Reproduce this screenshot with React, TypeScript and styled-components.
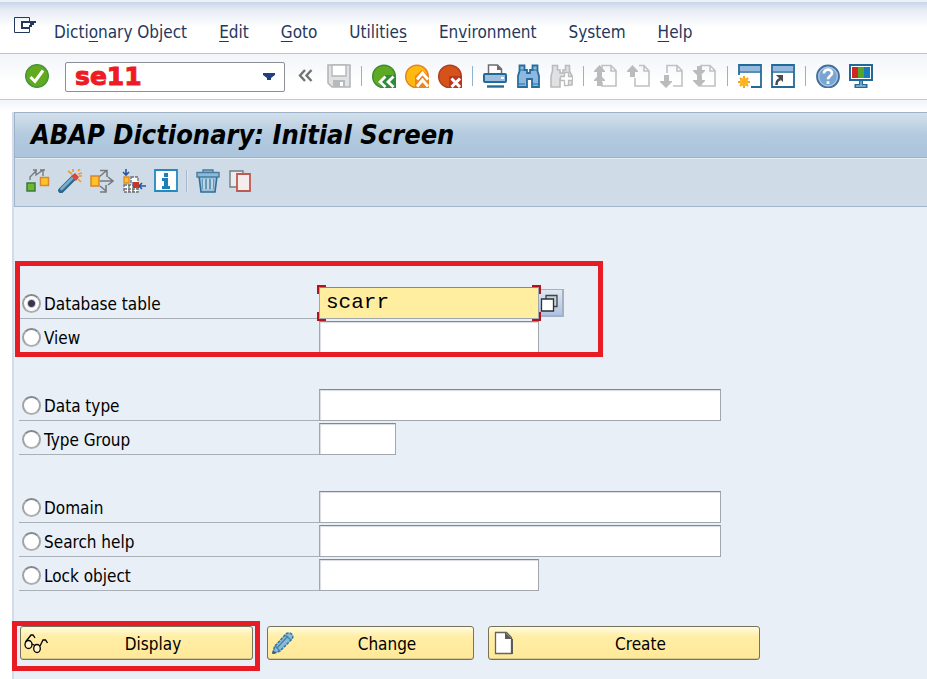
import React, { useState } from "react";
import styled, { createGlobalStyle, css } from "styled-components";

const GlobalStyle = createGlobalStyle`
  *, *::before, *::after { box-sizing: border-box; }
  body {
    margin: 0;
    background: #fff;
    color: #000;
    font-family: "DejaVu Sans Condensed", "DejaVu Sans", sans-serif;
    font-size: 17px;
  }
  button, input { font: inherit; color: inherit; }
`;

const Page = styled.div`
  display: flex;
  flex-direction: column;
  min-height: 100vh;
`;

const MenuBar = styled.nav`
  display: flex;
  align-items: center;
  height: 54px;
  padding: 8px 12px 0 13px;
  border-top: 2px solid #edf2f8;
  border-bottom: 1px solid #bcc3ca;
  background: linear-gradient(#c8d6e8, #e6ecf4 8px, #fff 26px);
`;

const MenuToggle = styled.button`
  display: flex;
  width: 24px;
  height: 24px;
  margin: 0 17px 8px 0;
  padding: 0;
  border: 0;
  background: none;
`;

const MenuList = styled.div`
  display: flex;
  gap: 32px;
`;

const MenuItem = styled.button`
  padding: 0;
  border: 0;
  background: none;
  color: #24375e;
  line-height: 24px;
  white-space: nowrap;

  u { text-underline-offset: 3px; }
`;

const SystemBar = styled.div`
  display: flex;
  align-items: center;
  gap: 9px;
  height: 46px;
  padding: 0 25px 2px;
  border-bottom: 1px solid #c3c9cf;
  background: linear-gradient(#f1f4f9, #fff 28px);
`;

const IconButton = styled.button`
  display: flex;
  flex: none;
  width: 24px;
  height: 24px;
  padding: 0;
  border: 0;
  background: none;
`;

const Separator = styled.span`
  flex: none;
  width: 1px;
  height: 20px;
  margin: 0 1px;
  background: #8fb4d2;
`;

const CommandField = styled.div`
  display: flex;
  align-items: center;
  flex: none;
  width: 220px;
  height: 30px;
  margin: 2px 0 0 7px;
  padding: 0 8px 0 9px;
  border: 1px solid #8c9096;
  border-radius: 2px;
  background: #fff;
`;

const CommandInput = styled.input`
  flex: 1;
  min-width: 0;
  height: 28px;
  padding: 0;
  border: 0;
  outline: 0;
  background: none;
  color: #ed1c24;
  font-family: "DejaVu Sans", sans-serif;
  font-size: 25px;
  font-weight: 700;
  -webkit-text-stroke: 1px #ed1c24;
`;

const DropButton = styled.button`
  display: flex;
  padding: 0;
  border: 0;
  background: none;
`;

const Workspace = styled.main`
  display: flex;
  flex: 1;
  flex-direction: column;
  padding: 12px 0 0 12px;
  background: linear-gradient(#f1f5fa, #fff 12px);
`;

const Panel = styled.section`
  flex: 1;
  border-left: 2px solid #d3dce8;
  background: #e8eff6;
`;

const TitleBar = styled.header`
  display: flex;
  align-items: center;
  height: 46px;
  padding: 0 16px;
  border: 1px solid #9fb2c6;
  border-right: 0;
  background: linear-gradient(#d3e0eb, #b3cadf 50%, #abc4dc);
`;

const Title = styled.h1`
  margin: 0;
  font-size: 27px;
  font-style: italic;
  font-weight: 700;
  line-height: 32px;
  white-space: nowrap;
`;

const AppBar = styled.div`
  display: flex;
  align-items: center;
  gap: 8px;
  height: 49px;
  padding: 0 11px 3px;
  border: 1px solid #a3b5c8;
  border-width: 0 0 1px 1px;
  background: #cfdce8;
  box-shadow: inset 0 1px 0 #e3ebf3;
`;

const AppSeparator = styled.span`
  width: 2px;
  height: 22px;
  border-left: 1px solid #a5b8cc;
  border-right: 1px solid #dfe8f0;
`;

const Form = styled.form`
  display: flex;
  flex-direction: column;
  align-items: flex-start;
  gap: 36px;
  padding: 80px 5px 19px;
`;

const Group = styled.div`
  position: relative;
  display: flex;
  flex-direction: column;
  gap: 2px;
`;

const Marker = styled.div<{ $target: "group" | "button" }>`
  position: absolute;
  inset: ${({ $target }) =>
    $target === "group" ? "-26px -39px -4px -4px" : "-5px -7px -11px -8px"};
  border: 5px solid #e81c24;
  pointer-events: none;
`;

const Row = styled.div`
  display: flex;
  align-items: center;
  height: 32px;
`;

const RowLabel = styled.label`
  display: flex;
  align-items: center;
  gap: 3px;
  width: 300px;
  height: 32px;
  padding: 2px 0 0 3px;
  border-bottom: 1px solid #a9b0b8;
`;

const Radio = styled.input`
  appearance: none;
  width: 19px;
  height: 19px;
  margin: 0;
  border: 2px solid #9a9da1;
  border-color: #85888c #a0a3a7 #adb0b3;
  border-radius: 50%;
  background: #fff;

  &:checked {
    background: radial-gradient(circle, #38384c 0 3px, #c9ccd8 4px, #fff 5px);
  }
`;

const widths = { short: 77, medium: 220, long: 402 };

const FieldBox = styled.div`
  position: relative;
  display: flex;
`;

const Field = styled.input<{ $size: keyof typeof widths; $active: boolean }>`
  width: ${({ $size }) => widths[$size]}px;
  height: 32px;
  padding: 0 6px 2px;
  border: 1px solid #a2a7ad;
  border-top-color: #83888e;
  border-radius: 0;
  outline: 0;
  background: #fff;
  box-shadow: inset 1px 1px 1px #d9dde1;
  font-family: "Liberation Mono", monospace;
  font-size: 21px;

  ${({ $active }) =>
    $active &&
    css`
      background: #ffeea0;
      box-shadow: none;
    `}
`;

const FocusCorners = styled.svg`
  position: absolute;
  inset: -2px;
  pointer-events: none;
`;

const MatchButton = styled.button`
  display: flex;
  align-items: center;
  justify-content: center;
  width: 25px;
  height: 28px;
  padding: 0 4px 0 0;
  border: 1px solid #a5b1c3;
  border-width: 1px 2px 2px 0;
  background: linear-gradient(#dfe8f2, #adc2e2);
`;

const Actions = styled.div`
  display: flex;
  align-items: center;
  gap: 14px;
  padding: 16px 6px 19px;
`;

const actionWidths = { narrow: 207, normal: 233, wide: 272 };

const ActionSlot = styled.div<{ $size: keyof typeof actionWidths }>`
  position: relative;
  width: ${({ $size }) => actionWidths[$size]}px;
`;

const ActionButton = styled.button`
  display: grid;
  grid-template-columns: 24px 1fr;
  align-items: center;
  width: 100%;
  height: 34px;
  padding: 0 2px 0 3px;
  border: 1px solid #77725a;
  border-radius: 3px;
  background: linear-gradient(#fffbe0, #ffeea6 30%, #ffe999);
  box-shadow: inset 0 -1px 0 #d9c988;
`;

const ActionText = styled.span`
  padding: 2px 0 0 8px;
  text-align: center;
`;

const Glyph = ({ children, size = 24 }: { children: React.ReactNode; size?: number }) => (
  <svg width={size} height={size} viewBox="0 0 24 24" fill="none" aria-hidden="true">
    {children}
  </svg>
);

const pageOutline = "M8 7V1.5h9l5 5V22H8v-4M17 1.5V7h5";
const upArrow = "M5.500 1L11 7v1H8v5H3V8H0V7z";

const icons: Record<string, React.ReactNode> = {
  menu: (
    <>
      <path d="M16.500 5V1.500H1.500v15h15V13" stroke="#24375e" />
      <path d="M8 5h15v2h-2v2h-2v2h-2v2H8z" fill="#24375e" />
      <path d="M10 7h7v2h-1v2h-6z" fill="#fff" />
    </>
  ),
  check: (
    <>
      <circle cx="12" cy="12" r="11.300" fill="#61a91e" stroke="#4b9440" strokeWidth="1.500" />
      <path d="M5.500 13l4.500 4.500 8-11" stroke="#fff" strokeWidth="3" />
    </>
  ),
  collapse: <path d="M11 6l-5 5.500 5 5.500M17.500 6l-5 5.500 5 5.500" stroke="#727272" strokeWidth="2.400" />,
  save: (
    <>
      <path d="M1 1h22v22H5l-4-4z" fill="#e1e2e3" stroke="#b4b6b8" strokeWidth="1.600" />
      <path d="M5 1h14v11H5z" fill="#fff" stroke="#b4b6b8" strokeWidth="1.400" />
      <path d="M6 16h12v7H6z" fill="#b7b9bb" />
      <path d="M13 18h3v4h-3z" fill="#fff" />
    </>
  ),
  back: (
    <>
      <circle cx="12" cy="12.500" r="11.300" fill="#5eaa22" stroke="#3c8a36" strokeWidth="1.400" />
      <path d="M11 24l-5-6 7-7h11v13z" fill="#2f8a3c" />
      <path d="M13.500 12.500L8 18l5.500 5M21.500 12.500L16 18l5.500 5" stroke="#fff" strokeWidth="2.800" />
    </>
  ),
  exit: (
    <>
      <circle cx="12" cy="12.500" r="11.300" fill="#ffba12" stroke="#e8801b" strokeWidth="1.400" />
      <path d="M10 24V12l7-6 7 6v12z" fill="#ec851f" />
      <path d="M12 15.500L17.500 9l5.500 6.500M12 22.500l5.500-6.500 5.500 6.500" stroke="#fff" strokeWidth="2.800" />
    </>
  ),
  cancel: (
    <>
      <circle cx="12" cy="12.500" r="11.300" fill="#d55318" stroke="#b23c20" strokeWidth="1.400" />
      <path d="M11 12h13v12H11z" fill="#b93822" />
      <path d="M13.500 14.500l8.500 8.500M22 14.500L13.500 23" stroke="#fff" strokeWidth="3" />
    </>
  ),
  print: (
    <>
      <path d="M5.500 10V1h9l4 4v5" fill="#fff" stroke="#6a6d70" strokeWidth="1.500" />
      <path d="M14 1v5h5z" fill="#6a6d70" />
      <rect x="1" y="10" width="22" height="8" rx="1" fill="#9dbfe0" stroke="#246a99" strokeWidth="2" />
      <path d="M18 14h3" stroke="#fff" strokeWidth="2" />
      <path d="M4 22.500h17" stroke="#246a99" strokeWidth="2.400" />
    </>
  ),
  find: (
    <>
      <path
        d="M3.500 1.500h5V6H11v3h3V6h2.500V1.500h5V7l1.500 5v11h-7v-8h-5v8H2V12l1.500-5z"
        fill="#8eb8df"
        stroke="#246f9f"
        strokeWidth="1.800"
      />
      <path d="M3 6h5M17 6h5M2 20h7M16 20h7" stroke="#246f9f" />
    </>
  ),
  findNext: (
    <>
      <path d="M3.500 1.500h5V6H11v3h3V6h2.500V1.500h4V7l2.500 5v9h-7v-6h-5v8H2V12l1.500-5z" fill="#e0e1e2" stroke="#b9bbbd" strokeWidth="1.600" />
      <path d="M15.500 8.500h4v4h4v4h-4v5h-4v-5h-4v-4h4z" fill="#fff" stroke="#babcbe" strokeWidth="1.300" />
    </>
  ),
  first: (
    <>
      <path d={pageOutline} stroke="#bfc1c2" strokeWidth="1.600" />
      <path d={upArrow} fill="#b9bbbc" />
      <path d="M5.500 10L11 16v1H8v5H3v-5H0v-1z" fill="#b9bbbc" />
    </>
  ),
  previous: (
    <>
      <path d="M8 14v8h14V7l-5-5.500h-5M17 1.500V7h5" stroke="#bfc1c2" strokeWidth="1.600" />
      <path d={upArrow} fill="#b9bbbc" />
    </>
  ),
  next: (
    <>
      <path d="M7 9V1.500h10l5 5V22H13M17 1.500V7h5" stroke="#bfc1c2" strokeWidth="1.600" />
      <path d="M6 24l6-6v-1H9v-6H4v6H0v1z" fill="#b9bbbc" />
    </>
  ),
  last: (
    <>
      <path d={pageOutline} stroke="#bfc1c2" strokeWidth="1.600" />
      <path d="M6 13l6-6V6H9V2H4v4H0v1z" fill="#b9bbbc" />
      <path d="M6 23l6-6v-1H9v-5H4v5H0v1z" fill="#b9bbbc" />
    </>
  ),
  session: (
    <>
      <path d="M1 11V1h22v22H13" fill="#fff" stroke="#246a99" strokeWidth="1.800" />
      <path d="M2 2h20v5H2z" fill="#94bade" />
      <path d="M1 8h22" stroke="#246a99" strokeWidth="1.500" />
      <path d="M6 12v12M0 18h12M2 14l8 8M10 14l-8 8" stroke="#f3a51f" strokeWidth="2" />
      <circle cx="6" cy="18" r="4" fill="#ffb51e" />
    </>
  ),
  shortcut: (
    <>
      <path d="M1 1h22v22H1z" fill="#fff" stroke="#246a99" strokeWidth="1.800" />
      <path d="M2 2h20v5H2z" fill="#94bade" />
      <path d="M1 8h22" stroke="#246a99" strokeWidth="1.500" />
      <path d="M5.500 21c0-4 1-5 4-6" stroke="#484b50" strokeWidth="2.600" />
      <path d="M5 11h7v7z" fill="#484b50" />
    </>
  ),
  help: (
    <>
      <circle cx="12" cy="12.500" r="11" fill="#79a5cf" stroke="#426f9b" strokeWidth="1.800" />
      <circle cx="12" cy="12.500" r="9.300" stroke="#a9c8e5" strokeWidth="1.200" />
      <path d="M8 9.500c0-5 8-5 8-.5 0 3-4 3-4 6.200M12 17.300v2.700" stroke="#fff" strokeWidth="2.700" />
    </>
  ),
  layout: (
    <>
      <path d="M1 1h22v15H1z" fill="#fff" stroke="#246a99" strokeWidth="2" />
      <path d="M3 3h6v11H3z" fill="#ce2724" />
      <path d="M9 3h6v11H9z" fill="#55a52b" />
      <path d="M15 3h6v11h-6z" fill="#187bbd" />
      <path d="M12 17v5M5.500 22h13" stroke="#246a99" strokeWidth="4" />
      <path d="M7 22h10M12 17v5" stroke="#8fb9dc" strokeWidth="1.400" />
    </>
  ),
  otherObject: (
    <>
      <path d="M4 11V8l6-6v4l7-5v6M7 1h4M14 1h5" stroke="#777a7d" strokeWidth="1.400" />
      <path d="M1 14h8v8H1z" fill="#70b72d" stroke="#397b3e" strokeWidth="1.500" />
      <path d="M14.500 8.500h8v8h-8z" fill="#ffc223" stroke="#d88730" strokeWidth="1.500" />
    </>
  ),
  wand: (
    <>
      <path d="M3 21.500L15.500 9" stroke="#2e6687" strokeWidth="5.600" strokeLinecap="round" />
      <path d="M3.500 20L15 8.500" stroke="#72adcf" strokeWidth="2.600" strokeLinecap="round" />
      <path d="M13 7l4-3 4 4-3 4z" fill="#d54a40" />
      <path d="M10 2l4 3M15 0v3M20 2l2-2M20 5l4-1M20 10l3 3M21 7h3" stroke="#f09b2c" strokeWidth="1.700" />
    </>
  ),
  whereUsed: (
    <>
      <path d="M9 8l7-6M10 1.500h7V8M10 12h12M18 8l5 4-5 4M10 17l6 5M10 23h6v-7" stroke="#777a7d" strokeWidth="1.600" />
      <path d="M1 7h8v10H1z" fill="#ffc225" stroke="#d8842d" strokeWidth="1.500" />
    </>
  ),
  hierarchy: (
    <>
      <path d="M9 8h7v6H9zM2 16h14v7H2zM7 16v7M11 16v7M2 20h14" fill="#fff" stroke="#696d72" strokeWidth="1.300" strokeDasharray="3 1" />
      <path d="M4 0v5M1 3l3 3 3-3M24 17h-6M20 14l-3 3 3 3" stroke="#2456a2" strokeWidth="1.600" />
      <path d="M2 8h5v6H2z" fill="#ffc421" stroke="#e4892d" strokeWidth="1.300" />
      <path d="M11 13h6v6h-6z" fill="#c33927" />
    </>
  ),
  info: (
    <>
      <path d="M1 1h22v21H1z" fill="#fff" stroke="#238ac0" strokeWidth="1.800" />
      <path d="M10 4h4v4h-4zM8 9h6v8h2v3H8v-3h2v-5H8z" fill="#1d80b8" />
    </>
  ),
  trash: (
    <>
      <path d="M3 7h18l-2 16H5z" fill="#9bc1dc" stroke="#306e95" strokeWidth="1.600" />
      <path d="M8 10v10M12 10v10M16 10v10" stroke="#306e95" strokeWidth="3" />
      <path d="M8 10v10M12 10v10M16 10v10" stroke="#e3eff7" strokeWidth="1.600" />
      <path d="M1 3.500h22V8H1zM7 3V1h10v2" fill="#91b9d7" stroke="#467ea3" strokeWidth="1.400" />
    </>
  ),
  copy: (
    <>
      <path d="M2 2h13v16H2z" fill="#e8edf1" stroke="#777b80" strokeWidth="1.400" />
      <path d="M9 5h13v17H9z" fill="#f5eded" stroke="#c0594e" strokeWidth="1.800" />
    </>
  ),
  display: (
    <>
      <ellipse cx="4.500" cy="13.500" rx="3.500" ry="4" fill="#fff6cf" stroke="#000" strokeWidth="1.300" />
      <ellipse cx="13" cy="17.500" rx="3.300" ry="4" fill="#fff6cf" stroke="#000" strokeWidth="1.300" />
      <path d="M1.500 11L7 4h2l2 3M8 13l3 1.500M16 15l3-6h2.500l2 3" stroke="#000" strokeWidth="1.300" />
    </>
  ),
  change: (
    <>
      <path d="M2 22.500l1.500-7L15 3c3-3 9 1 6 5L9 20z" fill="#8ab9dc" stroke="#36789d" strokeWidth="1.600" strokeDasharray="3 1" />
      <path d="M6 17L17 5M14 4l6 5M4 15l5 5" stroke="#4683aa" strokeWidth="1.300" />
      <path d="M1 23l1-4 3 3z" fill="#305e76" />
    </>
  ),
  create: (
    <>
      <path d="M3.500 1.500h11l5 5v16h-16z" fill="#fff" stroke="#66645f" strokeWidth="1.300" />
      <path d="M13 1l7 7h-7zM19 8h2v15h-2z" fill="#5c5b58" />
    </>
  ),
};

const menus = [
  ["Dicti", "o", "nary Object"],
  ["", "E", "dit"],
  ["", "G", "oto"],
  ["Utilitie", "s", ""],
  ["En", "v", "ironment"],
  ["S", "y", "stem"],
  ["", "H", "elp"],
];

const systemTools: [string, string][][] = [
  [["collapse", "Hide command field"], ["save", "Save"]],
  [["back", "Back"], ["exit", "Exit"], ["cancel", "Cancel"]],
  [["print", "Print"], ["find", "Find"], ["findNext", "Find next"]],
  [["first", "First page"], ["previous", "Previous page"], ["next", "Next page"], ["last", "Last page"]],
  [["session", "New session"], ["shortcut", "Create shortcut"]],
  [["help", "Help on screen"], ["layout", "Customize local layout"]],
];

const appTools: [string, string][][] = [
  [["otherObject", "Other object"], ["wand", "Activate"], ["whereUsed", "Where-used list"], ["hierarchy", "Object list"], ["info", "Documentation"]],
  [["trash", "Delete"], ["copy", "Copy"]],
];

type FieldRow = { id: string; label: string; size: keyof typeof widths };

const groups: FieldRow[][] = [
  [
    { id: "table", label: "Database table", size: "medium" },
    { id: "view", label: "View", size: "medium" },
  ],
  [
    { id: "type", label: "Data type", size: "long" },
    { id: "group", label: "Type Group", size: "short" },
  ],
  [
    { id: "domain", label: "Domain", size: "long" },
    { id: "search", label: "Search help", size: "long" },
    { id: "lock", label: "Lock object", size: "medium" },
  ],
];

const actions: { icon: string; label: string; size: keyof typeof actionWidths }[] = [
  { icon: "display", label: "Display", size: "normal" },
  { icon: "change", label: "Change", size: "narrow" },
  { icon: "create", label: "Create", size: "wide" },
];

const Tool = ({ icon, label }: { icon: string; label: string }) => (
  <IconButton type="button" aria-label={label}>
    <Glyph>{icons[icon]}</Glyph>
  </IconButton>
);

export default function App() {
  const [selected, setSelected] = useState("table");
  const [command, setCommand] = useState("se11");
  const [values, setValues] = useState<Record<string, string>>({ table: "scarr" });

  return (
    <Page>
      <GlobalStyle />
      <MenuBar>
        <MenuToggle type="button" aria-label="Menu">
          <Glyph>{icons.menu}</Glyph>
        </MenuToggle>
        <MenuList>
          {menus.map(([before, key, after]) => (
            <MenuItem type="button" key={before + key + after}>
              {before}
              <u>{key}</u>
              {after}
            </MenuItem>
          ))}
        </MenuList>
      </MenuBar>

      <SystemBar>
        <Tool icon="check" label="Enter" />
        <CommandField>
          <CommandInput aria-label="Command" value={command} onChange={(e) => setCommand(e.target.value)} />
          <DropButton type="button" aria-label="Command history">
            <svg width="14" height="10" viewBox="0 0 14 10" aria-hidden="true">
              <path d="M1 1h12v2L9 6v2H5V6L1 3z" fill="#24407a" />
            </svg>
          </DropButton>
        </CommandField>
        {systemTools.map((tools, i) => (
          <React.Fragment key={i}>
            {i > 0 && <Separator />}
            {tools.map(([icon, label]) => (
              <Tool key={icon} icon={icon} label={label} />
            ))}
          </React.Fragment>
        ))}
      </SystemBar>

      <Workspace>
        <Panel>
          <TitleBar>
            <Title>ABAP Dictionary: Initial Screen</Title>
          </TitleBar>
          <AppBar>
            {appTools.map((tools, i) => (
              <React.Fragment key={i}>
                {i > 0 && <AppSeparator />}
                {tools.map(([icon, label]) => (
                  <Tool key={icon} icon={icon} label={label} />
                ))}
              </React.Fragment>
            ))}
          </AppBar>

          <Form>
            {groups.map((rows, i) => (
              <Group key={i}>
                {rows.map(({ id, label, size }) => (
                  <Row key={id}>
                    <RowLabel>
                      <Radio type="radio" name="object" checked={selected === id} onChange={() => setSelected(id)} />
                      {label}
                    </RowLabel>
                    <FieldBox>
                      <Field
                        aria-label={`${label} name`}
                        $size={size}
                        $active={selected === id}
                        value={values[id] ?? ""}
                        onChange={(e) => setValues({ ...values, [id]: e.target.value })}
                      />
                      {selected === id && size === "medium" && (
                        <FocusCorners width="224" height="36" viewBox="0 0 224 36" fill="none" aria-hidden="true">
                          <path d="M1 9V1h8M215 1h8v8M1 27v8h8M215 35h8v-8" stroke="#b3131c" strokeWidth="2" />
                        </FocusCorners>
                      )}
                    </FieldBox>
                    {selected === id && (
                      <MatchButton type="button" aria-label="Search values">
                        <svg width="18" height="18" viewBox="0 0 18 18" aria-hidden="true">
                          <path d="M6 1.500h11v11H6z" fill="#c3d3d2" stroke="#3f4347" strokeWidth="1.300" />
                          <path d="M1.500 5h12v12h-12z" fill="#fff" stroke="#2d3034" strokeWidth="1.300" />
                        </svg>
                      </MatchButton>
                    )}
                  </Row>
                ))}
                {i === 0 && <Marker $target="group" />}
              </Group>
            ))}
          </Form>

          <Actions>
            {actions.map(({ icon, label, size }, i) => (
              <ActionSlot key={label} $size={size}>
                <ActionButton type="button">
                  <Glyph>{icons[icon]}</Glyph>
                  <ActionText>{label}</ActionText>
                </ActionButton>
                {i === 0 && <Marker $target="button" />}
              </ActionSlot>
            ))}
          </Actions>
        </Panel>
      </Workspace>
    </Page>
  );
}
